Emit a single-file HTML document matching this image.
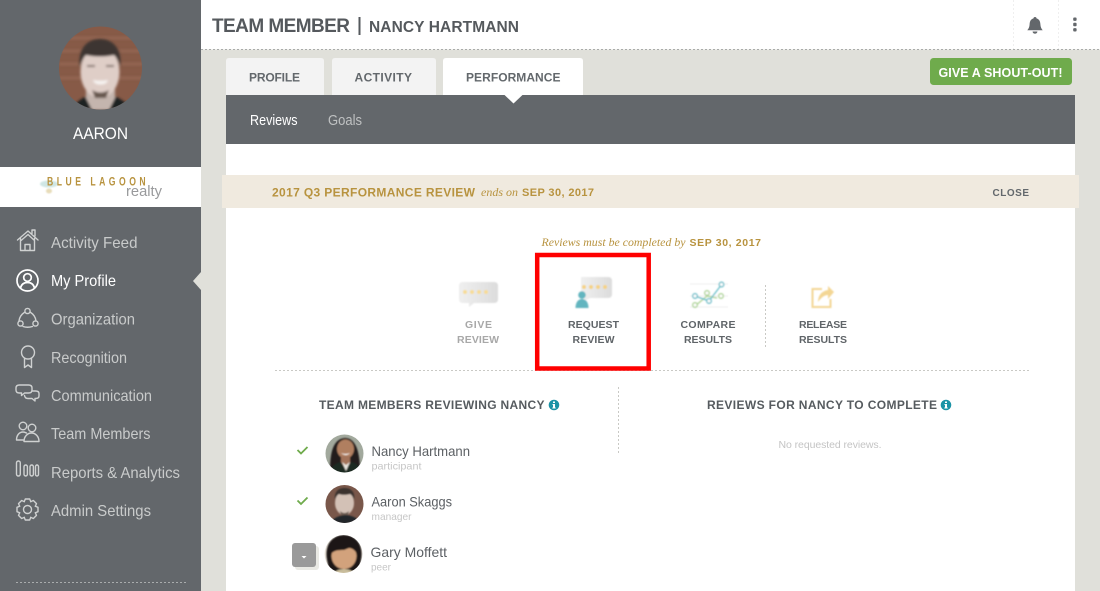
<!DOCTYPE html>
<html><head><meta charset="utf-8"><title>Team Member</title>
<style>
html,body{margin:0;padding:0;width:1100px;height:591px;overflow:hidden;background:#e0e0da}
svg{display:block}
text{font-family:"Liberation Sans",sans-serif;white-space:pre}
.nav{font-size:16px;fill:#c9cbcb}
.ic{fill:none;stroke:#cfd1d1;stroke-width:1.4;stroke-linejoin:round;stroke-linecap:round}
.cap{font-size:10.5px;font-weight:bold;fill:#5f6468}
.tab{font-size:12px;font-weight:bold;fill:#63686c}
.gold{font-size:12px;font-weight:bold;fill:#b8933f}
.it{font-family:"Liberation Serif",serif;font-style:italic;fill:#b8933f}
.nm{font-size:14px;fill:#5c6064}
.sub{font-size:10.5px;fill:#c6c6c6}
.dot{stroke:#c9c9c5;stroke-width:1;stroke-dasharray:2 2;fill:none}
</style></head><body>
<svg width="1100" height="591" viewBox="0 0 1100 591" xmlns="http://www.w3.org/2000/svg">
<defs>
<clipPath id="c0"><circle cx="100.500" cy="68" r="41.500"/></clipPath>
<clipPath id="c1"><circle cx="344.500" cy="453.500" r="19"/></clipPath>
<clipPath id="c2"><circle cx="344.500" cy="504" r="19"/></clipPath>
<clipPath id="c3"><circle cx="343.500" cy="554" r="19"/></clipPath>
<filter id="b1" x="-20%" y="-20%" width="140%" height="140%"><feGaussianBlur stdDeviation="1.200"/></filter>
<filter id="b2" x="-20%" y="-20%" width="140%" height="140%"><feGaussianBlur stdDeviation=".7"/></filter>
<linearGradient id="bub" x1="0" y1="0" x2="1" y2="0"><stop offset="0" stop-color="#efefef"/><stop offset="1" stop-color="#dcdcdc"/></linearGradient>
<path id="tooth" d="M-3.250-7.850L-2.200-10.500H2.200L3.250-7.850"/>
</defs>

<!-- background -->
<rect width="1100" height="591" fill="#e0e0da"/>
<rect x="201" width="899" height="49.500" fill="#fff"/>
<line x1="201" y1="49.500" x2="1100" y2="49.500" stroke="#a9abaa" stroke-dasharray="2 2"/>
<line x1="1013.500" y1="0" x2="1013.500" y2="49" stroke="#efefef" stroke-dasharray="2 2"/>
<line x1="1058.500" y1="0" x2="1058.500" y2="49" stroke="#efefef" stroke-dasharray="2 2"/>

<!-- sidebar -->
<rect width="201" height="591" fill="#63676b"/>
<rect y="167" width="201" height="40" fill="#fff"/>
<path d="M201 272l-8 9 8 9z" fill="#e0e0da"/>

<g clip-path="url(#c0)">
 <rect x="59" y="26" width="84" height="84" fill="#875a47"/>
 <g stroke="#a0735e" stroke-width="3" opacity=".5" filter="url(#b1)"><path d="M59 38h84M59 51h84M59 64h84M59 78h84"/></g>
 <g filter="url(#b1)">
 <path d="M72 110c3-8 11-13 20-16h17c9 3 18 8 23 16z" fill="#1c2024"/>
 <path d="M86 84h29v14l-6 12h-17l-6-12z" fill="#c4b5ae"/>
 <ellipse cx="100" cy="72" rx="19.500" ry="26" fill="#dfcec7"/>
 <path d="M80 68c-3-19 7-29 20-29s23 10 20 29c-1-6-3-10-6-13-9 2-19 2-28 0-3 3-5 7-6 13z" fill="#3d3631"/>
 <path d="M93 80q7.500 1.500 15 0-1 4.500-7.500 4.500t-7.500-4.500z" fill="#f7f4f2"/>
 <path d="M92 90q8.500 5 17 0l-3 8h-11z" fill="#66564d"/>
 <path d="M87 66h8M106 66h8" stroke="#5a4a42" stroke-width="1.600"/>
 </g>
</g>
<text x="73" y="139" font-size="16.500" fill="#fff" textLength="55" lengthAdjust="spacingAndGlyphs">AARON</text>

<!-- logo -->
<ellipse cx="49" cy="184" rx="9" ry="3.500" fill="#cfe6e4" filter="url(#b2)"/>
<ellipse cx="49" cy="191" rx="3" ry="2.500" fill="#e7dcb8" filter="url(#b2)"/>
<text transform="translate(47 185.500) scale(.72 1)" font-size="12" font-weight="bold" fill="#b8933f" textLength="137" lengthAdjust="spacing">BLUE LAGOON</text>
<text x="126" y="196" font-size="15" fill="#999a9c" textLength="36" lengthAdjust="spacingAndGlyphs">realty</text>

<!-- nav -->
<text class="nav" x="51" y="248" textLength="86.500" lengthAdjust="spacingAndGlyphs">Activity Feed</text>
<text class="nav" x="51" y="286" textLength="65" lengthAdjust="spacingAndGlyphs" style="fill:#fff">My Profile</text>
<text class="nav" x="51" y="324.500" textLength="84" lengthAdjust="spacingAndGlyphs">Organization</text>
<text class="nav" x="51" y="363" textLength="76" lengthAdjust="spacingAndGlyphs">Recognition</text>
<text class="nav" x="51" y="401" textLength="101" lengthAdjust="spacingAndGlyphs">Communication</text>
<text class="nav" x="51" y="439" textLength="99.500" lengthAdjust="spacingAndGlyphs">Team Members</text>
<text class="nav" x="51" y="478" textLength="129" lengthAdjust="spacingAndGlyphs">Reports &amp; Analytics</text>
<text class="nav" x="51" y="516" textLength="100" lengthAdjust="spacingAndGlyphs">Admin Settings</text>

<!-- nav icons -->
<g class="ic">
 <path d="M17.500 240L28 231l10 9M20.500 238.500V250.500h14V238.500M20.500 241l7.500-6.500 6.500 6M25 250.500v-6h5v6M32 233.500V230h3v6"/>
</g>
<g class="ic" style="stroke:#fff;stroke-width:1.700"><circle cx="27.500" cy="280.500" r="10.500"/><circle cx="27.500" cy="277.500" r="3.800"/><path d="M20.500 288c1-4 4-5.500 7-5.500s6 1.500 7 5.500"/></g>
<g class="ic"><circle cx="27.500" cy="311" r="2.600"/><circle cx="20.500" cy="323.500" r="2.600"/><circle cx="35.500" cy="323.500" r="2.600"/><path d="M25 312q-5.500 3.500-6 9M30 312q5.500 3.500 6 9M23 326.500q4.500 1.500 9.500 0"/></g>
<g class="ic"><circle cx="28" cy="352.500" r="6.500"/><path d="M24.500 358.500v9l3.500-2.500 3.500 2.500v-9"/></g>
<g class="ic"><path d="M19.500 385h9q3.500 0 3.500 3v2q0 3-3.500 3h-4l-3 2.500v-2.500h-2q-3.500 0-3.500-3v-2q0-3 3.500-3z"/><path d="M32 391h3.500q3.500 0 3.500 2.500v2.500q0 2.500-3.500 2.500h-.5v2.500l-3-2.500h-4q-3 0-3.500-3"/></g>
<g class="ic"><circle cx="23" cy="426" r="3.800"/><circle cx="32" cy="428" r="3.800"/><path d="M16.500 440c0-5 3-8 6.500-8 1.500 0 2.500.5 3.500 1M39 441.500H24c0-5 3.500-8.500 7.500-8.500s7.500 3.500 7.500 8.500zM16.500 440h6.500"/></g>
<g class="ic"><rect x="16.500" y="461" width="3.800" height="15" rx="1.900"/><rect x="24" y="465" width="3.400" height="11" rx="1.700"/><rect x="30" y="465" width="3.400" height="11" rx="1.700"/><rect x="35.500" y="465" width="3" height="11" rx="1.500"/></g>
<g class="ic" transform="translate(27.500 509.500)">
 <circle r="4"/>
 <use href="#tooth"/><use href="#tooth" transform="rotate(45)"/><use href="#tooth" transform="rotate(90)"/><use href="#tooth" transform="rotate(135)"/><use href="#tooth" transform="rotate(180)"/><use href="#tooth" transform="rotate(225)"/><use href="#tooth" transform="rotate(270)"/><use href="#tooth" transform="rotate(315)"/>
</g>

<line x1="16" y1="582.500" x2="186" y2="582.500" stroke="#a9acad" stroke-dasharray="2 2"/>

<!-- header -->
<text x="212" y="32" font-size="19" font-weight="bold" fill="#55595d" textLength="138" lengthAdjust="spacing">TEAM MEMBER</text>
<rect x="358.500" y="17" width="2" height="18" fill="#55595d"/>
<text x="369" y="32" font-size="15.500" font-weight="bold" fill="#55595d" textLength="150" lengthAdjust="spacing">NANCY HARTMANN</text>
<path d="M1035 17c1 0 1.500.6 1.500 1.400 2.800.8 3.700 3 3.900 6 .1 2.500.9 4.300 2.300 5.900h-15.400c1.400-1.600 2.200-3.400 2.300-5.900.2-3 1.100-5.200 3.900-6 0-.8.500-1.400 1.500-1.400zM1032.600 31.500h4.800c0 1.400-1 2.200-2.400 2.200s-2.400-.8-2.400-2.200z" fill="#63676b"/>
<g fill="#63676b"><rect x="1073.200" y="17.500" width="3.400" height="3.400" rx="1"/><rect x="1073.200" y="22.800" width="3.400" height="3.400" rx="1"/><rect x="1073.200" y="28.100" width="3.400" height="3.400" rx="1"/></g>

<!-- tabs -->
<path d="M226 95V61q0-3 3-3h92q3 0 3 3v34z" fill="#f3f3f3"/>
<path d="M332 95V61q0-3 3-3h98q3 0 3 3v34z" fill="#f3f3f3"/>
<path d="M443 95V61q0-3 3-3h134q3 0 3 3v34z" fill="#fff"/>
<text class="tab" x="249" y="81.500" textLength="51" lengthAdjust="spacing">PROFILE</text>
<text class="tab" x="354.500" y="81.500" textLength="57.500" lengthAdjust="spacing">ACTIVITY</text>
<text class="tab" x="466" y="81.500" textLength="94.500" lengthAdjust="spacing">PERFORMANCE</text>

<!-- shout out -->
<rect x="930" y="58" width="142" height="27" rx="3.500" fill="#6fab4c"/>
<text x="938.500" y="77" font-size="12.500" font-weight="bold" fill="#fff" textLength="124" lengthAdjust="spacing">GIVE A SHOUT-OUT!</text>

<!-- panel -->
<rect x="226" y="144" width="849" height="447" fill="#fff"/>
<rect x="226" y="95" width="849" height="49" fill="#63676b"/>
<path d="M504 94.500h19l-9.500 9z" fill="#fff"/>
<text x="250" y="125" font-size="14.500" fill="#fff" textLength="47.500" lengthAdjust="spacingAndGlyphs">Reviews</text>
<text x="328" y="125" font-size="14.500" fill="#bfc1c2" textLength="34" lengthAdjust="spacingAndGlyphs">Goals</text>

<!-- cream band -->
<rect x="222" y="175" width="857" height="33" fill="#f0eadf"/>
<text class="gold" x="272" y="196.500" textLength="203" lengthAdjust="spacing">2017 Q3 PERFORMANCE REVIEW</text>
<text class="it" x="481" y="196" font-size="12" textLength="37" lengthAdjust="spacingAndGlyphs">ends on</text>
<text class="gold" x="522" y="196" style="font-size:11px" textLength="72" lengthAdjust="spacing">SEP 30, 2017</text>
<text x="992.500" y="196" font-size="10" font-weight="bold" fill="#63686c" textLength="36.500" lengthAdjust="spacing">CLOSE</text>

<text class="it" x="541.500" y="246" font-size="11.500" textLength="144" lengthAdjust="spacingAndGlyphs">Reviews must be completed by</text>
<text class="gold" x="689.500" y="246" style="font-size:10.500px" textLength="71.500" lengthAdjust="spacing">SEP 30, 2017</text>

<!-- action icons -->
<g filter="url(#b2)">
 <path d="M463 282h31q4 0 4 4v13q0 4-4 4h-20l-5 4v-4h-6q-4 0-4-4v-13q0-4 4-4z" fill="url(#bub)"/>
 <g fill="#f7dc95"><circle cx="465" cy="292" r="2"/><circle cx="472" cy="292" r="2"/><circle cx="479" cy="292" r="2"/><circle cx="486" cy="292" r="2"/></g>
 <path d="M581 277h27q4 0 4 4v13q0 4-4 4h-18l-6 3v-9h-3z" fill="url(#bub)"/>
 <g fill="#f5d282"><circle cx="584" cy="287" r="2"/><circle cx="591" cy="287" r="2"/><circle cx="598" cy="287" r="2"/><circle cx="605" cy="287" r="2"/></g>
 <circle cx="582" cy="295" r="3.800" fill="#62b5bf"/>
 <path d="M575.500 308c0-6 3-9 6.500-9s6.500 3 6.500 9z" fill="#62b5bf"/>
</g>
<g filter="url(#b2)" opacity=".95">
 <g stroke="#ececec" fill="none"><path d="M690 284h38M690 296h38M690 307h38"/></g>
 <path d="M695 306l12-10 10 2" fill="none" stroke="#a5cf8b" stroke-width="1.200"/>
 <g fill="#fff" stroke="#a5cf8b" stroke-width="1.300"><circle cx="695" cy="305" r="2.300"/><circle cx="707" cy="293" r="2.300"/><circle cx="721" cy="296" r="2.300"/></g>
 <path d="M695 296l14 5 13-17" fill="none" stroke="#5cb8c4" stroke-width="1.200"/>
 <g fill="#fff" stroke="#5cb8c4" stroke-width="1.300"><circle cx="695" cy="296" r="2.300"/><circle cx="709" cy="301" r="2.300"/><circle cx="721.500" cy="284.500" r="2.300"/></g>
 <path d="M822 289h-9.500v18h18v-8" fill="none" stroke="#f3d48f" stroke-width="2"/>
 <path d="M818 302c0-7 4-11 10-12v-4l6 6-6 7v-4c-4 0-7 3-10 7z" fill="#f3d48f"/>
</g>

<!-- action labels -->
<g text-anchor="middle">
 <text x="478.500" y="328" class="cap" style="fill:#a8a8a8" textLength="27" lengthAdjust="spacing">GIVE</text>
 <text x="478" y="343" class="cap" style="fill:#a8a8a8" textLength="42" lengthAdjust="spacing">REVIEW</text>
 <text x="593.500" y="328" class="cap" textLength="51" lengthAdjust="spacing">REQUEST</text>
 <text x="593.500" y="343" class="cap" textLength="42" lengthAdjust="spacing">REVIEW</text>
 <text x="708" y="328" class="cap" textLength="55" lengthAdjust="spacing">COMPARE</text>
 <text x="708" y="343" class="cap" textLength="48" lengthAdjust="spacing">RESULTS</text>
 <text x="823" y="328" class="cap" textLength="48" lengthAdjust="spacing">RELEASE</text>
 <text x="823" y="343" class="cap" textLength="48" lengthAdjust="spacing">RESULTS</text>
</g>
<line class="dot" x1="765.500" y1="285" x2="765.500" y2="347"/>
<line class="dot" x1="275" y1="370.500" x2="1030" y2="370.500"/>
<line class="dot" x1="618.500" y1="387" x2="618.500" y2="455"/>

<!-- red box -->
<rect x="537.200" y="255" width="111.500" height="113.500" fill="none" stroke="#f00" stroke-width="4.500"/>

<!-- lower section -->
<text x="319" y="409" font-size="12" font-weight="bold" fill="#565b5f" textLength="225.500" lengthAdjust="spacing">TEAM MEMBERS REVIEWING NANCY</text>
<circle cx="554" cy="405" r="5.300" fill="#1b93a6"/>
<path d="M553 401.500h2v1.500h-2zM552.500 404h2.500v3.500h.7v1h-3.400v-1h.7v-2.500h-.5z" fill="#fff"/>
<text x="707" y="409" font-size="12" font-weight="bold" fill="#565b5f" textLength="230" lengthAdjust="spacing">REVIEWS FOR NANCY TO COMPLETE</text>
<circle cx="946" cy="405" r="5.300" fill="#1b93a6"/>
<path d="M945 401.500h2v1.500h-2zM944.500 404h2.500v3.500h.7v1h-3.400v-1h.7v-2.500h-.5z" fill="#fff"/>
<text x="778.500" y="448" font-size="10.500" fill="#c4c4c4" textLength="103" lengthAdjust="spacing">No requested reviews.</text>

<!-- checks -->
<path d="M297.500 450l3.500 3.500 6.500-6.500M297.500 500.500l3.500 3.500 6.500-6.500" fill="none" stroke="#6fab4c" stroke-width="1.800"/>

<!-- avatars -->
<g clip-path="url(#c1)">
 <rect x="325" y="434" width="40" height="40" fill="#a2a99d"/>
 <g filter="url(#b2)">
 <path d="M330 472c0-14 1-33 15-34 13 0 15 20 15 34z" fill="#221c1a"/>
 <ellipse cx="345.500" cy="449" rx="8.500" ry="9.500" fill="#b07f60"/>
 <path d="M341 456h9v7l-4.500 6-4.500-6z" fill="#a3735a"/>
 <path d="M330 474c1-8 6-11 11-12l5 8 5-8c5 1 10 4 11 12z" fill="#1d2a24"/>
 <path d="M342 462l4 9 4-9-4 3z" fill="#e9e6df"/>
 <path d="M341 453q4.500 2 9 0-4 4-9 0z" fill="#fff"/>
 </g>
</g>
<g clip-path="url(#c2)">
 <rect x="325" y="484" width="40" height="40" fill="#79574a"/>
 <g filter="url(#b2)">
 <path d="M330 524c1-5 8-8 14-9h3c6 1 13 4 14 9z" fill="#24272a"/>
 <ellipse cx="344.500" cy="503" rx="9.500" ry="12" fill="#d3c1b6"/>
 <path d="M335 500c-1-8 3-12 9.500-12s11 4 9.500 12c-1-3-2-5-4-6-4 1-8 1-11 0-2 1-3 3-4 6z" fill="#3a322d"/>
 <path d="M340 511q4.500 4 9 0l-1 4h-7z" fill="#6a5a50"/>
 </g>
</g>
<g clip-path="url(#c3)">
 <rect x="324" y="534" width="40" height="40" fill="#efe9e0"/>
 <g filter="url(#b2)">
 <path d="M327 560c-3-16 6-25 17-25s20 9 17 25l-3 14h-28z" fill="#1b1614"/>
 <ellipse cx="344" cy="556" rx="12.500" ry="13" fill="#d2a27c"/>
 <path d="M331 554c0-8 6-12 13-12s13 4 13 12c-2-4-5-6-8-6l-5 2c-5 0-10 0-13 4z" fill="#1b1614"/>
 <path d="M333 574c2-3 6-5 11-5s9 2 11 5z" fill="#c9bd9c"/>
 </g>
</g>

<text class="nm" x="371.500" y="456" textLength="98.500" lengthAdjust="spacingAndGlyphs">Nancy Hartmann</text>
<text class="sub" x="371.500" y="469.500" textLength="50" lengthAdjust="spacingAndGlyphs">participant</text>
<text class="nm" x="371.500" y="506.500" textLength="80.500" lengthAdjust="spacingAndGlyphs">Aaron Skaggs</text>
<text class="sub" x="371.500" y="520" textLength="40" lengthAdjust="spacingAndGlyphs">manager</text>
<text class="nm" x="370.500" y="557" textLength="76.500" lengthAdjust="spacingAndGlyphs">Gary Moffett</text>
<text class="sub" x="371" y="570.500" textLength="20" lengthAdjust="spacingAndGlyphs">peer</text>

<!-- dropdown button -->
<rect x="295" y="546" width="24" height="24" rx="3" fill="#e9e9e4"/>
<rect x="292" y="543" width="24" height="24" rx="3" fill="#9a9a9a"/>
<path d="M301.500 556h5l-2.500 2.500z" fill="#fff"/>
</svg>
</body></html>
